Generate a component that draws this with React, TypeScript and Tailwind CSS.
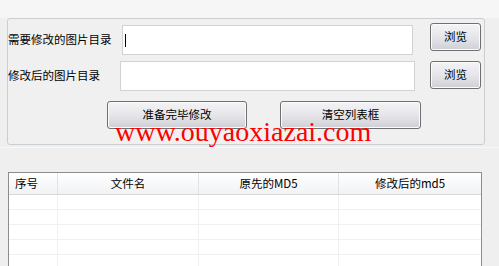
import React from 'react';

const cjk = "font-['SimSun','Noto_Sans_CJK_SC',sans-serif]";

function WinButton({ label, className }: { label: string; className: string }) {
  return (
    <div
      className={`flex items-center justify-center rounded-[3px] border border-[#707070] bg-gradient-to-b from-[#f4f4f6] via-[#e6e6ea] to-[#cfd0d6] text-[11.5px] text-black shadow-[inset_0_0_0_1px_#fbfbfb] ${cjk} ${className}`}
    >
      {label}
    </div>
  );
}

const columns = [
  { title: '序号', width: 'w-[49px]', align: 'justify-start pl-[6px]' },
  { title: '文件名', width: 'w-[141px]', align: 'justify-center' },
  { title: '原先的MD5', width: 'w-[140px]', align: 'justify-center' },
  { title: '修改后的md5', width: 'flex-1', align: 'justify-center' },
];

export default function App() {
  const rows = [0, 1, 2, 3, 4];

  return (
    <div className="relative h-[266px] w-[499px] overflow-hidden bg-[#efefef]">
      {/* 上部留白 */}
      <div className="h-[18px] bg-[#f6f6f6]" />

      {/* 分组框 */}
      <div className="ml-[7px] flex h-[127px] w-[478px] flex-col rounded-[3px] border border-[#c9ced3] bg-[#f0f0f0]">
        <div className="mt-[4px] flex items-start">
          <div className={`mt-[2px] flex h-[30px] w-[114px] items-center text-[11.5px] text-black ${cjk}`}>
            需要修改的图片目录
          </div>
          <div className="mt-[2px] flex h-[30px] w-[291px] items-center border border-[#d2d2d2] bg-white pl-[2px]">
            <div className="h-[13px] w-px bg-black" />
          </div>
          <WinButton label="浏览" className="ml-[17px] h-[28px] w-[51px]" />
        </div>

        <div className="mt-[6px] flex items-start">
          <div className={`flex h-[30px] w-[112px] items-center text-[11.5px] text-black ${cjk}`}>
            修改后的图片目录
          </div>
          <div className="h-[30px] w-[295px] border border-[#d2d2d2] bg-white" />
          <WinButton label="浏览" className="ml-[15px] h-[28px] w-[51px]" />
        </div>

        <div className="mt-[10px] flex pl-[99px]">
          <WinButton label="准备完毕修改" className="h-[28px] w-[140px]" />
          <WinButton label="清空列表框" className="ml-[33px] h-[28px] w-[141px]" />
        </div>
      </div>

      <div className="mt-[2px] h-px bg-[#f8f8f8]" />

      {/* 列表 */}
      <div className="ml-[8px] mt-[24px] w-[474px] border border-[#8c8c8c] bg-white">
        <div className="flex h-[22px] border-b border-[#d8d8d8] bg-gradient-to-b from-white to-[#f1f2f4]">
          {columns.map((c, i) => (
            <div
              key={c.title}
              className={`flex items-center text-[11.5px] text-black ${cjk} ${c.width} ${c.align} ${
                i < columns.length - 1 ? 'border-r border-[#e2e3e5]' : ''
              }`}
            >
              {c.title}
            </div>
          ))}
        </div>
        {rows.map((r) => (
          <div key={r} className="flex h-[15px] border-b border-[#f1f1f1]">
            <div className="w-[49px] border-r border-[#f0f0f0]" />
            <div className="w-[141px] border-r border-[#f0f0f0]" />
            <div className="w-[140px] border-r border-[#f0f0f0]" />
            <div className="flex-1" />
          </div>
        ))}
      </div>

      {/* 水印 */}
      <div className="absolute left-[115px] top-[118px] font-['Liberation_Serif',serif] text-[28px] leading-none text-[#ff0000]">
        www.ouyaoxiazai.com
      </div>
    </div>
  );
}
